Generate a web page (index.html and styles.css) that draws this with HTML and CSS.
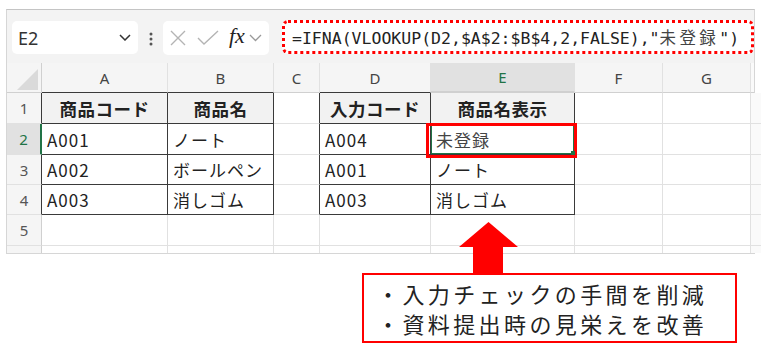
FILE: index.html
```html
<!DOCTYPE html>
<html lang="ja">
<head>
    <meta charset="UTF-8">
    <title>IFNA VLOOKUP</title>
    <link rel="stylesheet" href="styles.css">
</head>
<body>
    <div class="page">
        <div class="sheet">
            <div class="toolbar">
                <div class="namebox">
                    <span>E2</span>
                    <svg class="chev" width="12" height="7" viewBox="0 0 12 7"><polyline points="1,1 6,6 11,1" fill="none" stroke="#333" stroke-width="1.5"/></svg>
                </div>
                <svg class="more" width="4" height="14" viewBox="0 0 4 14">
                    <circle cx="2" cy="2" r="1.5" fill="#555"/>
                    <circle cx="2" cy="7" r="1.5" fill="#555"/>
                    <circle cx="2" cy="12" r="1.5" fill="#555"/>
                </svg>
                <div class="fnbtns">
                    <svg width="16" height="16" viewBox="0 0 16 16"><path d="M1 1 L15 15 M15 1 L1 15" stroke="#b4b4b4" stroke-width="1.4"/></svg>
                    <svg width="22" height="16" viewBox="0 0 22 16"><polyline points="1,8 7,14 21,1" fill="none" stroke="#b4b4b4" stroke-width="1.4"/></svg>
                    <span class="fx">fx</span>
                    <svg class="chev" width="13" height="8" viewBox="0 0 13 8"><polyline points="1,1 6.5,6.5 12,1" fill="none" stroke="#999" stroke-width="1.3"/></svg>
                </div>
                <div class="formula">=IFNA(VLOOKUP(D2,$A$2:$B$4,2,FALSE),"<span class="jp">未登録</span>")</div>
            </div>

            <div class="grid">
                <!-- column headers -->
                <div class="corner"><i></i></div>
                <div class="ch db">A</div>
                <div class="ch db">B</div>
                <div class="ch">C</div>
                <div class="ch db">D</div>
                <div class="ch sel">E</div>
                <div class="ch">F</div>
                <div class="ch">G</div>
                <div class="ch end"></div>

                <!-- row 1 -->
                <div class="rh dr">1</div>
                <div class="c th dr db">商品コード</div>
                <div class="c th dr db">商品名</div>
                <div class="c dr"></div>
                <div class="c th dr db">入力コード</div>
                <div class="c th dr db">商品名表示</div>
                <div class="c"></div>
                <div class="c"></div>
                <div class="c end"></div>

                <!-- row 2 -->
                <div class="rh sel">2</div>
                <div class="c dr db">A001</div>
                <div class="c dr db">ノート</div>
                <div class="c dr"></div>
                <div class="c dr db">A004</div>
                <div class="c dr db cur">未登録<span class="mark"></span><b class="handle"></b></div>
                <div class="c"></div>
                <div class="c"></div>
                <div class="c end"></div>

                <!-- row 3 -->
                <div class="rh dr">3</div>
                <div class="c dr db">A002</div>
                <div class="c dr db">ボールペン</div>
                <div class="c dr"></div>
                <div class="c dr db">A001</div>
                <div class="c dr db">ノート</div>
                <div class="c"></div>
                <div class="c"></div>
                <div class="c end"></div>

                <!-- row 4 -->
                <div class="rh dr">4</div>
                <div class="c dr db">A003</div>
                <div class="c dr db">消しゴム</div>
                <div class="c dr"></div>
                <div class="c dr db">A003</div>
                <div class="c dr db">消しゴム</div>
                <div class="c"></div>
                <div class="c"></div>
                <div class="c end"></div>

                <!-- row 5 -->
                <div class="rh">5</div>
                <div class="c"></div>
                <div class="c"></div>
                <div class="c"></div>
                <div class="c"></div>
                <div class="c"></div>
                <div class="c"></div>
                <div class="c"></div>
                <div class="c end"></div>

                <!-- row 6 (cut off) -->
                <div class="rh last"></div>
                <div class="c last"></div>
                <div class="c last"></div>
                <div class="c last"></div>
                <div class="c last"></div>
                <div class="c last"></div>
                <div class="c last"></div>
                <div class="c last"></div>
                <div class="c end last"></div>
            </div>
        </div>

        <svg class="arrow" width="59" height="52" viewBox="0 0 59 52">
            <polygon points="29.5,0 59,25 44,25 44,52 14,52 14,25 0,25" fill="#ff0000"/>
        </svg>

        <div class="note">
            <p>・入力チェックの手間を削減</p>
            <p>・資料提出時の見栄えを改善</p>
        </div>
    </div>
</body>
</html>
```

FILE: styles.css
```css
:root {
    --grid-line: #e1e1e1;
    --dark-line: #3a3a3a;
    --head-bg: #f5f5f5;
    --sel-bg: #e1e1e1;
    --green: #217346;
    --red: #ff0000;
    --jp: "Noto Sans CJK JP", "Noto Sans", sans-serif;
}

body {
    margin: 0;
    background: #fff;
    font-family: var(--jp);
    color: #222;
}

.page {
    position: relative;
    width: 764px;
    height: 352px;
    padding: 9px 0 0 6px;
    box-sizing: border-box;
}

.sheet {
    width: 749px;
    border: 1px solid #d6d6d6;
    border-top-color: #c4c4c4;
    box-sizing: border-box;
    background: #f3f3f3;
}

/* toolbar */

.toolbar {
    display: flex;
    align-items: flex-start;
    height: 53px;
    padding: 11px 0 0 5px;
    box-sizing: border-box;
}

.namebox {
    display: flex;
    align-items: center;
    justify-content: space-between;
    width: 126px;
    height: 33px;
    padding: 0 7px 0 6px;
    box-sizing: border-box;
    background: #fff;
    border-radius: 5px;
    font-family: "Noto Sans", sans-serif;
    font-size: 18px;
    color: #333;
}

.more {
    margin: 11px 0 0 11px;
}

.fnbtns {
    display: flex;
    align-items: center;
    width: 106px;
    height: 34px;
    margin-left: 10px;
    padding-left: 7px;
    box-sizing: border-box;
    background: #fff;
    border-radius: 5px;
}

.fnbtns svg {
    margin-right: 11px;
}

.fnbtns .fx {
    font-family: "Liberation Serif", serif;
    font-style: italic;
    font-size: 22px;
    color: #222;
    margin: -4px 4px 0 -1px;
}

.fnbtns .chev {
    margin: 0;
}

.formula {
    flex: 1;
    height: 34px;
    margin: -1px 0 0 13px;
    padding-left: 7px;
    box-sizing: border-box;
    border: 3px dotted var(--red);
    border-radius: 6px;
    background: #fff;
    font-family: "DejaVu Sans Mono", "Liberation Mono", monospace;
    font-size: 16.5px;
    line-height: 28px;
    color: #222;
    white-space: nowrap;
}

.formula .jp {
    font-family: var(--jp);
    letter-spacing: 3.4px;
    color: #444;
}

/* grid */

.grid {
    display: grid;
    grid-template-columns: 35px 126px 106px 46px 111px 144px 88px 88px 3px;
    grid-template-rows: 30px 31px 31px 30px 30px 31px 7px;
    background: #fff;
}

.grid > div {
    box-sizing: border-box;
    border-right: 1px solid var(--grid-line);
    border-bottom: 1px solid var(--grid-line);
    white-space: nowrap;
}

.corner {
    position: relative;
    background: var(--head-bg);
    border-right-color: #d0d0d0 !important;
    border-bottom-color: #d0d0d0 !important;
}

.corner i {
    position: absolute;
    right: 3px;
    bottom: 2px;
    width: 0;
    height: 0;
    border-left: 21px solid transparent;
    border-bottom: 21px solid #dadada;
}

.ch {
    display: flex;
    align-items: center;
    justify-content: center;
    background: var(--head-bg);
    font-family: "Noto Sans", sans-serif;
    font-size: 15px;
    color: #444;
    border-bottom-color: #d0d0d0 !important;
}

.rh {
    display: flex;
    align-items: center;
    justify-content: center;
    background: var(--head-bg);
    font-family: "Noto Sans", sans-serif;
    font-size: 15px;
    color: #555;
    border-right-color: #d0d0d0 !important;
}

.grid > .ch.sel {
    background: var(--sel-bg);
    color: var(--green);
    border-bottom: 2px solid var(--green);
}

.grid > .rh.sel {
    background: var(--sel-bg);
    color: var(--green);
    border-right: 2px solid var(--green) !important;
}

.c {
    display: flex;
    align-items: center;
    padding: 0 5px;
    font-size: 17px;
    letter-spacing: 1px;
}

.th {
    justify-content: center;
    background: #f2f2f2;
    font-weight: bold;
    font-size: 17.5px;
    letter-spacing: 0.5px;
}

.grid > .dr {
    border-right-color: var(--dark-line) !important;
}

.grid > .db {
    border-bottom-color: var(--dark-line) !important;
}

.grid > .end {
    border-right: none;
    background: #fafafa;
}

.grid > .last {
    border-bottom: none;
}

.cur {
    position: relative;
    color: #444;
    box-shadow: inset 1px 1px 0 var(--green), inset -1px -1px 0 var(--green);
}

.mark {
    position: absolute;
    left: -5px;
    top: -1px;
    right: -3px;
    bottom: -4px;
    border: 3px solid var(--red);
}

.handle {
    position: absolute;
    right: -1px;
    bottom: -1px;
    width: 4px;
    height: 4px;
    background: var(--green);
}

/* annotation */

.arrow {
    position: absolute;
    left: 459px;
    top: 222px;
}

.note {
    width: 375px;
    height: 70px;
    margin: 19px 0 0 356px;
    padding: 3px 0 0 13px;
    box-sizing: border-box;
    border: 2px solid var(--red);
    background: #fff;
    font-size: 22px;
    line-height: 30px;
    letter-spacing: 3.4px;
    color: #222;
}

.note p {
    margin: 0;
}
```
